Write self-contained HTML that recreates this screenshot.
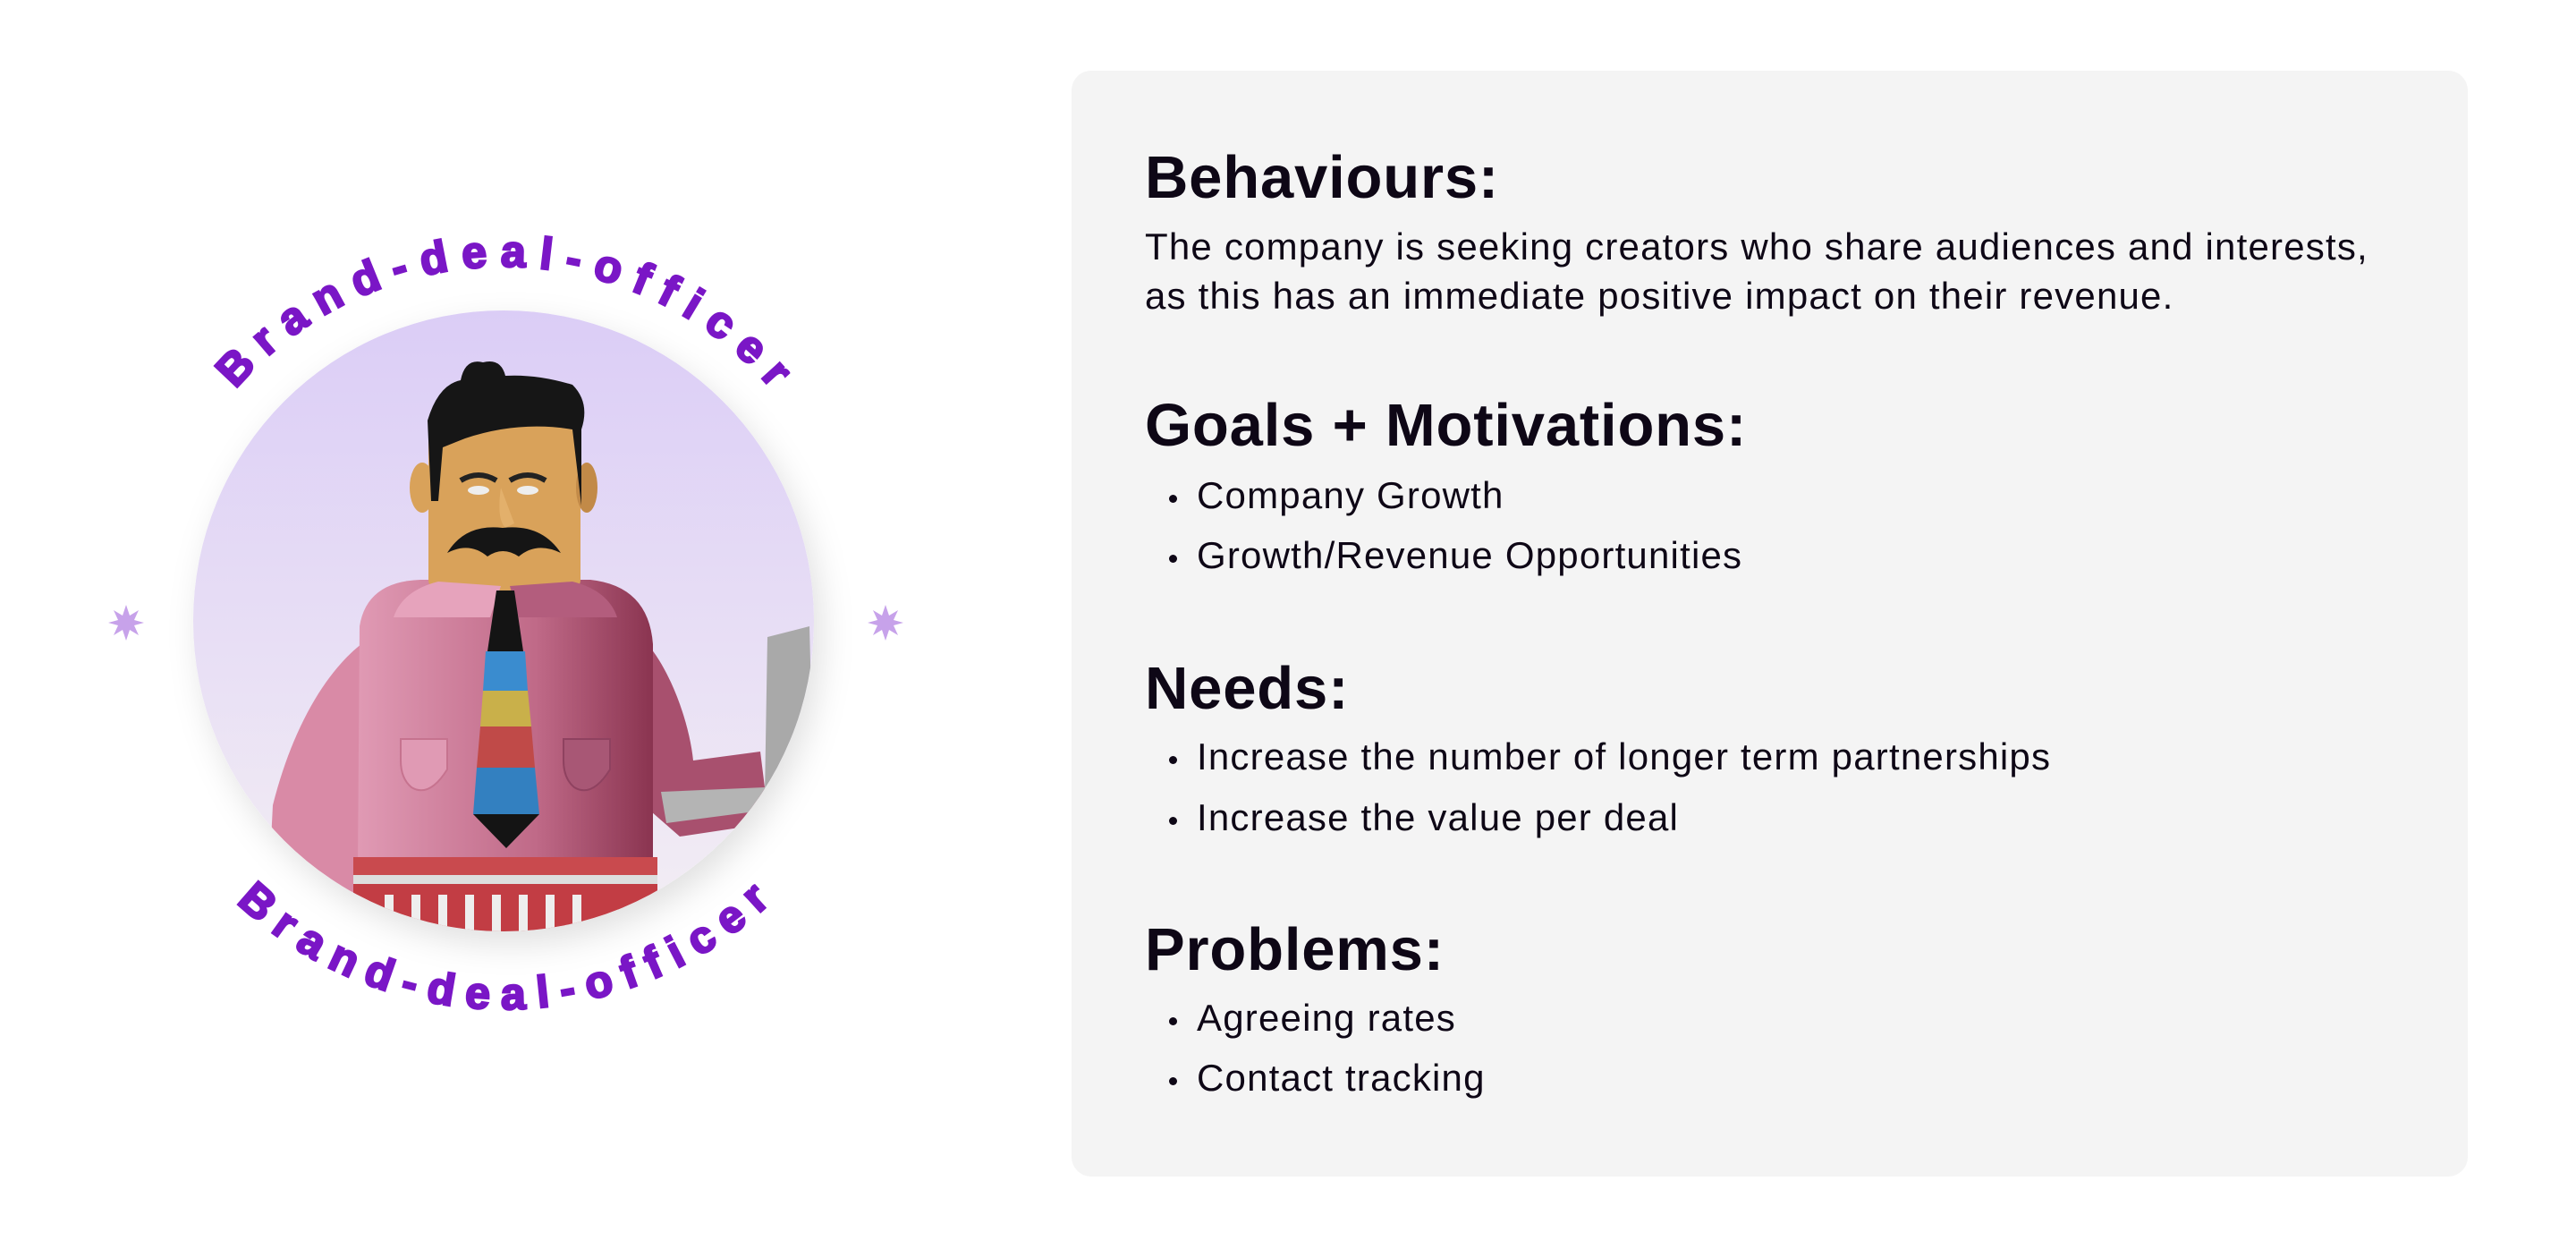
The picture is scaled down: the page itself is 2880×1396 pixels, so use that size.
<!DOCTYPE html>
<html><head><meta charset="utf-8"><style>
html,body{margin:0;padding:0;background:#fff;width:2880px;height:1396px;overflow:hidden;font-family:"Liberation Sans",sans-serif;color:#0e0716}
.card{position:absolute;left:1198px;top:79px;width:1561px;height:1236px;background:#f4f4f4;border-radius:22px}
.h{position:absolute;left:1280px;font-size:67px;font-weight:bold;line-height:67px;white-space:nowrap;letter-spacing:0.8px}
.t{position:absolute;left:1280px;font-size:42px;line-height:42px;white-space:nowrap;letter-spacing:1.2px}
.b{position:absolute;left:1338px;font-size:42px;line-height:42px;white-space:nowrap;letter-spacing:1.2px}
.b::before{content:"";position:absolute;left:-31px;top:20px;width:9px;height:9px;border-radius:50%;background:#0e0716}
</style></head><body>
<svg width="1200" height="1396" style="position:absolute;left:0;top:0">
<defs>
<linearGradient id="bg" x1="0" y1="0" x2="0" y2="1"><stop offset="0" stop-color="#dbcdf6"/><stop offset="1" stop-color="#f3eef4"/></linearGradient>
<clipPath id="cc2"><circle cx="563" cy="694" r="347"/></clipPath>
<filter id="sh" x="-20%" y="-20%" width="140%" height="140%"><feDropShadow dx="8" dy="14" stdDeviation="18" flood-color="#000" flood-opacity="0.12"/></filter>
<linearGradient id="pk" x1="0" x2="1"><stop offset="0" stop-color="#e09ab4"/><stop offset="0.6" stop-color="#c06a88"/><stop offset="1" stop-color="#8a3450"/></linearGradient>
<path id="top" d="M167,694 A396,396 0 0 1 959,694"/>
<path id="bot" d="M129,694 A434,434 0 0 0 997,694"/>
</defs>
<circle cx="563" cy="694" r="347" fill="url(#bg)" filter="url(#sh)"/>
<g clip-path="url(#cc2)">
<path d="M440,700 C380,720 330,800 305,900 L300,1000 L420,1000 L440,850 Z" fill="#d98aa6"/>
<path d="M700,700 C740,720 770,800 775,850 L850,840 L860,920 L760,935 L720,900 Z" fill="#a8506e"/>
<path d="M858,712 L905,700 L909,860 L870,895 L855,890 Z" fill="#a9a9a9"/>
<path d="M739,885 L855,880 L860,905 L745,920 Z" fill="#b4b4b4"/>
<path d="M402,700 Q410,650 470,648 L660,648 Q725,655 730,720 L730,970 L400,970 Z" fill="url(#pk)"/>
<rect x="395" y="958" width="340" height="20" fill="#c94a4e"/>
<rect x="395" y="978" width="340" height="10" fill="#dedede"/>
<rect x="395" y="988" width="340" height="60" fill="#c23d44"/>
<g fill="#eee"><rect x="430" y="1000" width="10" height="50"/><rect x="460" y="1000" width="10" height="50"/><rect x="490" y="1000" width="10" height="50"/><rect x="520" y="1000" width="10" height="50"/><rect x="550" y="1000" width="10" height="50"/><rect x="580" y="1000" width="10" height="50"/><rect x="610" y="1000" width="10" height="50"/><rect x="640" y="1000" width="10" height="50"/></g>
<path d="M448,826 L500,826 L500,860 Q480,892 460,880 Q448,870 448,850 Z" fill="#e09ab4" stroke="#c6738f" stroke-width="2"/>
<path d="M630,826 L682,826 L682,860 Q662,892 642,880 Q630,870 630,850 Z" fill="#a85775" stroke="#8f4260" stroke-width="2"/>
<rect x="479" y="470" width="170" height="190" rx="12" fill="#d9a25a"/>
<ellipse cx="472" cy="545" rx="14" ry="28" fill="#d9a25a"/>
<ellipse cx="656" cy="545" rx="12" ry="28" fill="#c28a48"/>
<path d="M482,560 L478,470 Q490,430 515,425 Q520,400 540,405 Q560,400 565,420 Q600,418 640,430 Q660,450 650,480 L650,565 L640,480 Q580,470 520,490 L495,500 L490,560 Z" fill="#161616"/>
<path d="M515,537 Q535,525 555,537" stroke="#222" stroke-width="6" fill="none"/>
<path d="M570,537 Q590,525 610,537" stroke="#222" stroke-width="6" fill="none"/>
<ellipse cx="535" cy="548" rx="12" ry="5" fill="#eee"/><ellipse cx="590" cy="548" rx="12" ry="5" fill="#eee"/>
<path d="M560,545 Q555,580 565,590 L575,585 Z" fill="#e3b06b"/>
<path d="M500,618 Q520,585 562,590 Q605,585 627,618 Q600,605 580,622 Q562,610 545,622 Q525,605 500,618 Z" fill="#151515"/>
<path d="M440,690 Q450,660 490,650 L560,655 L548,690 Z" fill="#e6a3bc"/>
<path d="M570,655 L640,650 Q680,660 690,690 L580,690 Z" fill="#b35d7d"/>
<path d="M555,660 L575,660 L585,728 L545,728 Z" fill="#141414"/>
<path d="M543,728 L587,728 L590,772 L540,772 Z" fill="#3a8ccf"/>
<path d="M540,772 L590,772 L594,812 L537,812 Z" fill="#c9b04a"/>
<path d="M537,812 L594,812 L598,858 L533,858 Z" fill="#c04a48"/>
<path d="M533,858 L598,858 L603,910 L529,910 Z" fill="#3380c0"/>
<path d="M529,910 L603,910 L566,948 Z" fill="#141414"/>
</g>
<g fill="#c7a2ea">
<path transform="translate(141,696)" d="M0,-20 L4,-8 L14,-14 L9,-3 L20,0 L9,3 L14,14 L4,8 L0,20 L-4,8 L-14,14 L-9,3 L-20,0 L-9,-3 L-14,-14 L-4,-8 Z"/>
<path transform="translate(990,696)" d="M0,-20 L4,-8 L14,-14 L9,-3 L20,0 L9,3 L14,14 L4,8 L0,20 L-4,8 L-14,14 L-9,3 L-20,0 L-9,-3 L-14,-14 L-4,-8 Z"/>
</g>
<text font-family="Liberation Sans, sans-serif" font-weight="bold" font-size="50" fill="#7a16c6" stroke="#7a16c6" stroke-width="2.5"><textPath href="#top" startOffset="50%" text-anchor="middle" textLength="680" lengthAdjust="spacing">Brand-deal-officer</textPath></text>
<text font-family="Liberation Sans, sans-serif" font-weight="bold" font-size="50" fill="#7a16c6" stroke="#7a16c6" stroke-width="2.5"><textPath href="#bot" startOffset="50%" text-anchor="middle" textLength="660" lengthAdjust="spacing">Brand-deal-officer</textPath></text>
</svg>
<div class="card"></div>
<div class="h" style="top:165px">Behaviours:</div>
<div class="t" style="top:255px">The company is seeking creators who share audiences and interests,</div>
<div class="t" style="top:310px">as this has an immediate positive impact on their revenue.</div>
<div class="h" style="top:442px">Goals + Motivations:</div>
<div class="b" style="top:533px">Company Growth</div>
<div class="b" style="top:600px">Growth/Revenue Opportunities</div>
<div class="h" style="top:736px">Needs:</div>
<div class="b" style="top:825px">Increase the number of longer term partnerships</div>
<div class="b" style="top:893px">Increase the value per deal</div>
<div class="h" style="top:1028px">Problems:</div>
<div class="b" style="top:1117px">Agreeing rates</div>
<div class="b" style="top:1184px">Contact tracking</div>
</body></html>
